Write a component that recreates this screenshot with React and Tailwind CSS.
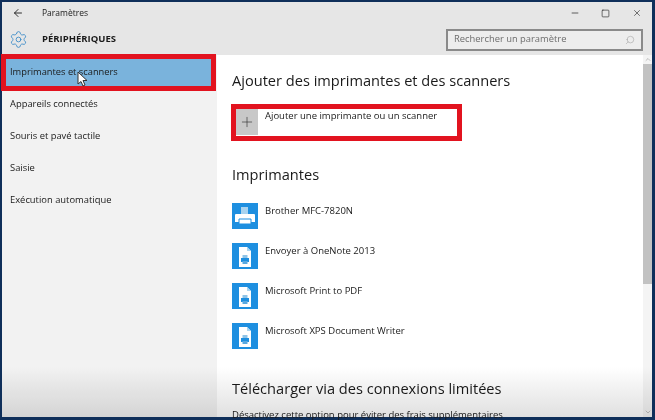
import React from "react";
import { ArrowLeft, Minus, Square, X, Search, Settings, Plus, ChevronUp, ChevronDown } from "lucide-react";

const navItems = ["Appareils connectés", "Souris et pavé tactile", "Saisie", "Exécution automatique"];

const PrinterIcon = () => (
  <svg width="26" height="26" viewBox="0 0 26 26">
    <rect width="26" height="26" fill="#1e8fe0" />
    <path d="M9 4h7v7H9z" fill="#a9d3ef" />
    <path d="M4 11h18a1 1 0 0 1 1 1v7H3v-7a1 1 0 0 1 1-1z" fill="#fff" />
    <path d="M7 16h12v5H7z" fill="#fff" stroke="#1e8fe0" />
  </svg>
);

const DocPrinterIcon = () => (
  <svg width="26" height="26" viewBox="0 0 26 26">
    <rect width="26" height="26" fill="#1e8fe0" />
    <path d="M7 4h8l4 4v16H7z" fill="#fff" />
    <path d="M15 4l4 4h-4z" fill="#a9d3ef" />
    <path d="M10.5 12h5v3h-5z" fill="#8fc4e8" />
    <path d="M9 15h8v4H9z" fill="#1e8fe0" />
    <path d="M10.5 18h5v3h-5z" fill="#5aa9e0" />
  </svg>
);

const printers = [
  { name: "Brother MFC-7820N", icon: <PrinterIcon /> },
  { name: "Envoyer à OneNote 2013", icon: <DocPrinterIcon /> },
  { name: "Microsoft Print to PDF", icon: <DocPrinterIcon /> },
  { name: "Microsoft XPS Document Writer", icon: <DocPrinterIcon /> },
];

const Cursor = () => (
  <svg className="absolute left-[71px] top-[12px]" width="12" height="17" viewBox="0 0 12 17">
    <path d="M1 1v12l3-2.5 2 4.5 2-1-2-4.5h4z" fill="#fff" stroke="#333" strokeWidth="1" />
  </svg>
);

export default function App() {
  return (
    <div className="relative h-[420px] w-[655px] overflow-hidden bg-[#0f2f5a] pt-[2px] pr-[3px] pb-[3px] pl-[2px] font-['Open_Sans','Noto_Sans',sans-serif] text-[#1a1a1a]">
      <div className="relative flex h-full flex-col bg-white">
        {/* title + search */}
        <div className="h-[53px] shrink-0 bg-[#e6e6e6]">
          <div className="flex h-[22px] items-center">
            <ArrowLeft className="ml-[10px] size-[12px]" strokeWidth={1.8} />
            <span className="ml-[18px] text-[8.5px]">Paramètres</span>
            <div className="ml-auto flex items-center">
              <Minus className="size-[10px]" strokeWidth={1.6} />
              <Square className="ml-[21px] size-[9px]" strokeWidth={1.6} />
              <X className="ml-[22px] mr-[10px] size-[10px]" strokeWidth={1.4} />
            </div>
          </div>
          <div className="flex h-[31px] items-center">
            <Settings className="ml-[7px] size-[19px] text-[#3a8ac8]" strokeWidth={1.1} />
            <span className="ml-[14px] text-[9.5px] font-bold">PÉRIPHÉRIQUES</span>
            <div className="mr-[9px] ml-auto flex h-[22px] w-[197px] items-center border-2 border-[#8a8a8a] bg-[#ededed] px-[6px]">
              <span className="text-[9.4px] text-[#6e6e6e]">Rechercher un paramètre</span>
              <Search className="ml-auto size-[10px] -scale-x-100 text-[#999]" strokeWidth={1.2} />
            </div>
          </div>
        </div>

        <div className="flex min-h-0 flex-1">
          {/* sidebar */}
          <div className="w-[215px] shrink-0 bg-[#f2f2f2]">
            <div className="relative -mt-[1px] -mb-[3px] -ml-[1px] flex h-[37px] w-[215px] items-center border-[5px] border-[#e2131f] bg-[#7ab3dc] pb-[1px] pl-[4px] text-[9.3px]">
              Imprimantes et scanners
              <Cursor />
            </div>
            {navItems.map((item) => (
              <div key={item} className="flex h-[32px] items-center pl-[8px] text-[9.4px]">
                {item}
              </div>
            ))}
          </div>

          {/* content */}
          <div className="min-w-0 flex-1 pt-[14px] pl-[15px]">
            <h2 className="text-[14.6px] leading-[22px] font-normal">Ajouter des imprimantes et des scanners</h2>
            <div className="mt-[13px] -ml-[1px] flex h-[37px] w-[231px] border-[5px] border-[#e2131f] bg-white">
              <div className="flex h-[26px] w-[22px] items-center justify-center bg-[#c8c8c8]">
                <Plus className="size-[16px] text-[#333]" strokeWidth={1} />
              </div>
              <span className="ml-[7px] text-[9.5px] leading-[14px]">Ajouter une imprimante ou un scanner</span>
            </div>
            <h2 className="mt-[22px] text-[14.6px] leading-[22px] font-normal">Imprimantes</h2>
            <div className="mt-[18px] flex flex-col gap-[14px]">
              {printers.map((p) => (
                <div key={p.name} className="flex h-[26px] gap-[7px]">
                  {p.icon}
                  <span className="pt-[1px] text-[9.5px] leading-[14px]">{p.name}</span>
                </div>
              ))}
            </div>
            <h2 className="mt-[28px] text-[14.6px] leading-[22px] font-normal">Télécharger via des connexions limitées</h2>
            <p className="mt-[9px] text-[9.5px] whitespace-nowrap">Désactivez cette option pour éviter des frais supplémentaires</p>
          </div>

          {/* scrollbar */}
          <div className="flex w-[9px] shrink-0 flex-col items-center bg-[#f4f4f4]">
            <ChevronUp className="h-[9px] w-[8px] text-[#888]" strokeWidth={1.5} />
            <div className="h-[220px] w-full bg-[#c2c2c2]" />
            <div className="flex-1" />
            <ChevronDown className="h-[10px] w-[8px] text-[#888]" strokeWidth={1.5} />
          </div>
        </div>

        {/* bottom fade */}
        <div className="pointer-events-none absolute inset-x-0 bottom-0 h-[50px] bg-gradient-to-b from-white to-[#e0e0e0] mix-blend-multiply" />
      </div>
    </div>
  );
}
